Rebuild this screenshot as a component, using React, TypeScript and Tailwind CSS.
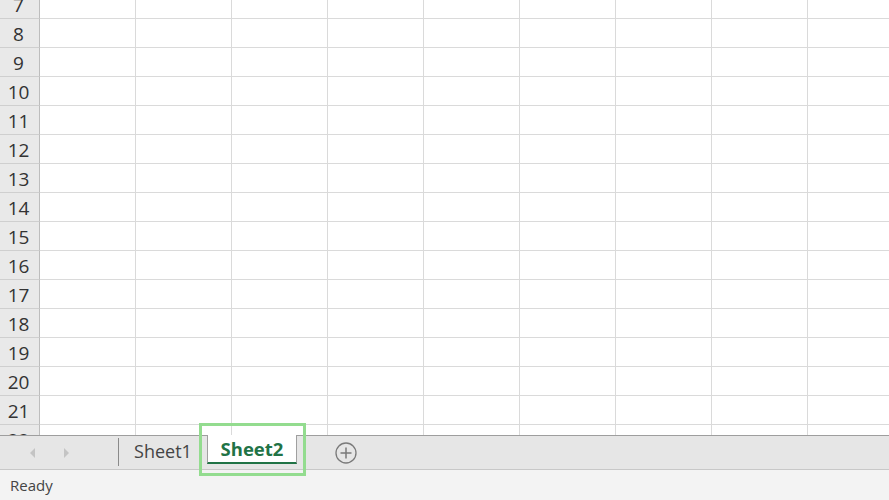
import { Fragment } from "react";

const rows = Array.from({ length: 16 }, (_, i) => i + 7);
const cols = Array.from({ length: 10 }, (_, i) => i);

export default function App() {
  return (
    <div
      className="relative flex h-[500px] w-[889px] flex-col overflow-hidden bg-white text-[#262626]"
      style={{ fontFamily: '"Open Sans", "Noto Sans", sans-serif' }}
    >
      {/* Grid */}
      <div className="h-[435px] overflow-hidden">
        <div className="-mt-[10px]">
          {rows.map((r) => (
            <div key={r} className="flex h-[29px]">
              <div className="flex w-[40px] shrink-0 items-center justify-center border-r border-b border-r-[#bdbdbd] border-b-[#cfcfcf] bg-[#e9e9e9] pt-[2px] pr-[2px] text-[19px] leading-none text-[#333]">
                {r}
              </div>
              {cols.map((c) => (
                <Fragment key={c}>
                  <div className="w-[96px] shrink-0 border-r border-b border-[#dadada]" />
                </Fragment>
              ))}
            </div>
          ))}
        </div>
      </div>

      {/* Sheet tab bar */}
      <div className="relative flex h-[35px] items-start border-t border-b border-t-[#9e9e9e] border-b-[#c8c8c8] bg-[#e6e6e6]">
        <div className="flex h-[33px] w-[118px] items-center">
          <svg width="8" height="12" viewBox="0 0 8 12" className="ml-[29px]">
            <polygon points="6,1 1,6 6,11" fill="#c4c4c4" />
          </svg>
          <svg width="8" height="12" viewBox="0 0 8 12" className="ml-[25px]">
            <polygon points="2,1 7,6 2,11" fill="#c4c4c4" />
          </svg>
        </div>
        <div className="mt-[2px] h-[28px] w-px bg-[#8a8a8a]" />
        <div className="flex h-[30px] w-[88px] items-center justify-center text-[18px] text-[#444]">
          Sheet1
        </div>
        <div className="-mt-px flex h-[29px] w-[90px] items-center justify-center border-x border-b-2 border-x-[#a0a0a0] border-b-[#217346] bg-white text-[18.5px] font-bold text-[#217346]">
          Sheet2
        </div>
        <div className="ml-[37px] flex h-[33px] items-center">
          <svg width="24" height="24" viewBox="0 0 24 24">
            <circle cx="12" cy="12" r="10" fill="none" stroke="#7a7a7a" strokeWidth="1.3" />
            <path d="M12 6.5v11M6.5 12h11" stroke="#7a7a7a" strokeWidth="1.5" />
          </svg>
        </div>
      </div>

      {/* Status bar */}
      <div className="flex h-[30px] items-center bg-[#f3f3f3] pt-px pl-[10px] text-[15px] text-[#444]">
        Ready
      </div>

      {/* Highlight box */}
      <div className="absolute left-[199px] top-[423px] h-[53px] w-[107px] border-[3px] border-[#93dc8f]" />
    </div>
  );
}
